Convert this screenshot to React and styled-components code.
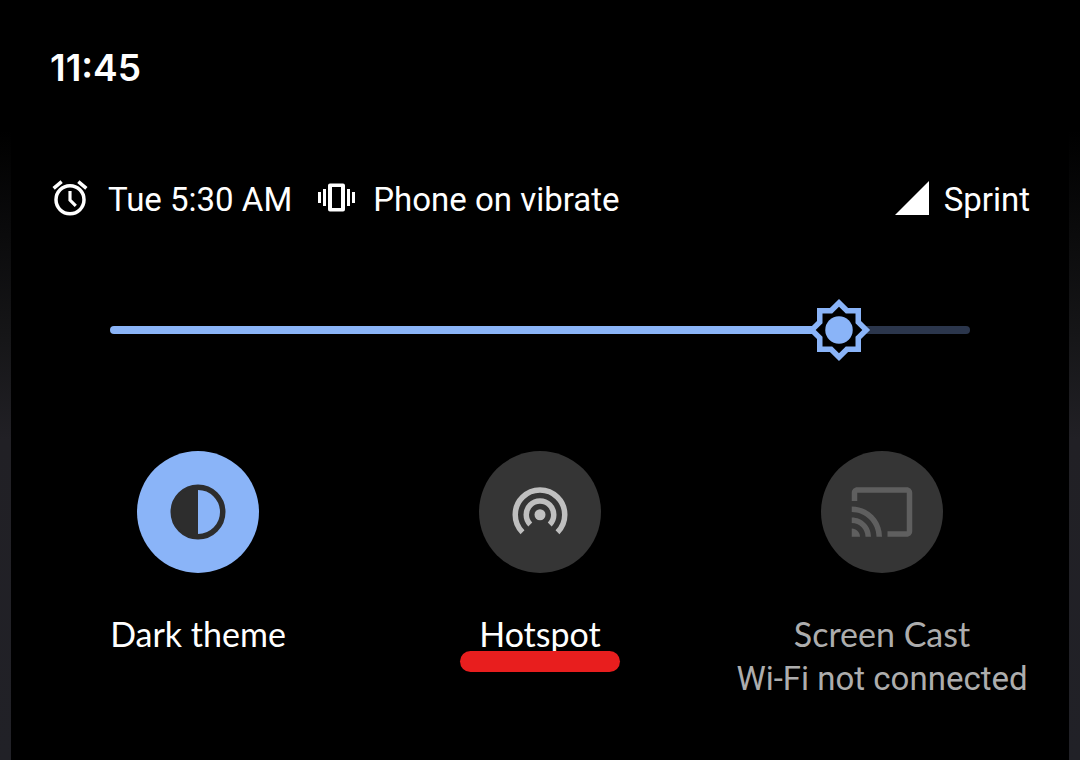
import React, { useState } from 'react';
import styled, { createGlobalStyle } from 'styled-components';

const BLUE = '#8ab4f8';

const GlobalStyle = createGlobalStyle`
  *, *::before, *::after { box-sizing: border-box; }
  body { margin: 0; background: #000; }
`;

const Screen = styled.div`
  min-height: 100vh;
  display: flex;
  flex-direction: column;
  padding: 0 11px;
  background: linear-gradient(to bottom, #000 130px, #161618 340px, #212025 440px, #212127 100%);
  color: #fff;
  font-family: Roboto, 'Liberation Sans', sans-serif;
`;

const Panel = styled.main`
  flex: 1;
  background: #000;
  padding-top: 44px;
`;

const Clock = styled.time`
  display: block;
  padding-left: 39px;
  font-family: Inter, sans-serif;
  font-weight: 600;
  font-size: 37px;
  line-height: 48px;
`;

const StatusRow = styled.header`
  display: flex;
  align-items: center;
  justify-content: space-between;
  margin-top: 85px;
  padding: 0 39px 0 38px;
  font-size: 33px;
  line-height: 44px;
`;

const StatusGroup = styled.div`
  display: flex;
  align-items: center;
  gap: 26px;
`;

const StatusItem = styled.span`
  display: flex;
  align-items: center;
  gap: ${(p) => p.$gap}px;
  white-space: nowrap;
`;

const Icon = styled.svg`
  display: block;
  flex: none;
  width: ${(p) => p.$size}px;
  height: ${(p) => p.$size}px;
`;

const StatusIcon = styled(Icon)`
  margin-bottom: 4px;
`;

const SliderArea = styled.div`
  position: relative;
  display: flex;
  align-items: center;
  height: 66px;
  margin: 74px 99px 0;
`;

const Range = styled.input`
  appearance: none;
  width: 100%;
  height: 8px;
  margin: 0;
  border-radius: 4px;
  outline: none;
  cursor: pointer;
  background: linear-gradient(to right, ${BLUE} var(--level), #2b364c var(--level));

  &::-webkit-slider-thumb {
    appearance: none;
    width: 2px;
    height: 60px;
    background: transparent;
  }
`;

const Thumb = styled(Icon)`
  position: absolute;
  top: 0;
  transform: translateX(-50%);
  pointer-events: none;
`;

const Tiles = styled.section`
  display: grid;
  grid-template-columns: repeat(3, 1fr);
  margin-top: 88px;
  padding: 0 16px;
`;

const Tile = styled.div`
  display: flex;
  flex-direction: column;
  align-items: center;
  color: ${(p) => (p.$dim ? '#adadad' : '#fff')};
`;

const TileButton = styled.button`
  display: grid;
  place-items: center;
  width: 122px;
  height: 122px;
  margin-bottom: 39px;
  padding: 0;
  border: 0;
  border-radius: 50%;
  cursor: pointer;
  background: ${(p) => (p.$active ? BLUE : '#353535')};
  color: ${(p) => p.$ink};
`;

const TileLabel = styled.span`
  position: relative;
  font-family: Lato, sans-serif;
  font-size: 34px;
  line-height: 44px;
  white-space: nowrap;
`;

const TileNote = styled.span`
  font-size: 33px;
  line-height: 46px;
  white-space: nowrap;
`;

const Marker = styled.span`
  position: absolute;
  left: 50%;
  top: 39px;
  width: 160px;
  height: 21px;
  margin-left: -80px;
  border-radius: 11px;
  background: #e81e1e;
`;

const AlarmIcon = () => (
  <StatusIcon $size={42} viewBox="0 0 24 24" fill="currentColor" aria-hidden="true">
    <path d="M22 5.72l-4.6-3.86-1.29 1.53 4.6 3.86L22 5.72zM7.88 3.39L6.6 1.86 2 5.71l1.29 1.53 4.59-3.85z" />
    <circle cx="12" cy="13" r="8" fill="none" stroke="currentColor" strokeWidth="2" />
    <path d="M12 8v5.2l3.3 3.3" fill="none" stroke="currentColor" strokeWidth="1.8" />
  </StatusIcon>
);

const VibrateIcon = () => (
  <StatusIcon $size={38} viewBox="0 0 38 38" fill="currentColor" aria-hidden="true">
    <path d="M0 13h3v11H0zM5 10h3v17H5zM29 10h3v17h-3zM34 13h3v11h-3z" />
    <path
      fillRule="evenodd"
      d="M12 4.500h13a2 2 0 0 1 2 2v24a2 2 0 0 1-2 2H12a2 2 0 0 1-2-2v-24a2 2 0 0 1 2-2zM14 8v21h9V8z"
    />
  </StatusIcon>
);

const SignalIcon = () => (
  <StatusIcon $size={34} viewBox="0 0 34 34" fill="currentColor" aria-hidden="true">
    <path d="M0 34h34V0z" />
  </StatusIcon>
);

const ContrastIcon = () => (
  <Icon $size={66} viewBox="0 0 24 24" aria-hidden="true">
    <circle cx="12" cy="12" r="9" fill="none" stroke="currentColor" strokeWidth="2" />
    <path d="M12 3a9 9 0 0 0 0 18z" fill="currentColor" />
  </Icon>
);

const HotspotIcon = () => (
  <Icon $size={66} viewBox="0 0 24 24" aria-hidden="true">
    <circle cx="12" cy="13" r="2" fill="currentColor" />
    <g fill="none" stroke="currentColor" strokeWidth="2">
      <path d="M8.460 16.540a5 5 0 1 1 7.080 0" />
      <path d="M5.640 19.360a9 9 0 1 1 12.720 0" />
    </g>
  </Icon>
);

const CastIcon = () => (
  <Icon $size={66} viewBox="0 0 24 24" fill="currentColor" aria-hidden="true">
    <path d="M21 3H3c-1.1 0-2 .9-2 2v3h2V5h18v14h-7v2h7c1.1 0 2-.9 2-2V5c0-1.100-.9-2-2-2zM1 18v3h3c0-1.660-1.340-3-3-3zm0-4v2c2.760 0 5 2.240 5 5h2c0-3.870-3.130-7-7-7zm0-4v2c4.970 0 9 4.030 9 9h2c0-6.080-4.930-11-11-11z" />
  </Icon>
);

const TILES = [
  { id: 'dark', label: 'Dark theme', icon: ContrastIcon, ink: '#2d2d2d', active: true },
  { id: 'hotspot', label: 'Hotspot', icon: HotspotIcon, ink: '#bfbfbf', marked: true },
  { id: 'cast', label: 'Screen Cast', note: 'Wi-Fi not connected', icon: CastIcon, ink: '#5f5f5f', dim: true },
];

const MAX_LEVEL = 1000;

function BrightnessSlider() {
  const [value, setValue] = useState(848);
  const level = `${(value / MAX_LEVEL) * 100}%`;
  return (
    <SliderArea>
      <Range
        type="range"
        min="0"
        max={MAX_LEVEL}
        value={value}
        aria-label="Display brightness"
        onChange={(e) => setValue(Number(e.target.value))}
        style={{ '--level': level }}
      />
      <Thumb $size={66} viewBox="0 0 24 24" aria-hidden="true" style={{ left: level }}>
        <path
          fill={BLUE}
          d="M20 8.690V4h-4.690L12 .69 8.690 4H4v4.690L.69 12 4 15.310V20h4.690L12 23.310 15.310 20H20v-4.690L23.310 12z"
        />
        <path
          fill="#000"
          d="M18 14.480V18h-3.520L12 20.480 9.520 18H6v-3.520L3.520 12 6 9.520V6h3.520L12 3.520 14.480 6H18v3.520L20.480 12z"
        />
        <circle cx="12" cy="12" r="5" fill={BLUE} />
      </Thumb>
    </SliderArea>
  );
}

export default function App() {
  return (
    <>
      <GlobalStyle />
      <Screen>
        <Panel>
          <Clock>11:45</Clock>
          <StatusRow>
            <StatusGroup>
              <StatusItem $gap={17}>
                <AlarmIcon />
                Tue 5:30 AM
              </StatusItem>
              <StatusItem $gap={17}>
                <VibrateIcon />
                Phone on vibrate
              </StatusItem>
            </StatusGroup>
            <StatusItem $gap={15}>
              <SignalIcon />
              Sprint
            </StatusItem>
          </StatusRow>
          <BrightnessSlider />
          <Tiles>
            {TILES.map(({ id, label, note, icon: Glyph, ink, active, dim, marked }) => (
              <Tile key={id} $dim={dim}>
                <TileButton type="button" $active={active} $ink={ink} aria-labelledby={id}>
                  <Glyph />
                </TileButton>
                <TileLabel id={id}>
                  {label}
                  {marked && <Marker />}
                </TileLabel>
                {note && <TileNote>{note}</TileNote>}
              </Tile>
            ))}
          </Tiles>
        </Panel>
      </Screen>
    </>
  );
}
